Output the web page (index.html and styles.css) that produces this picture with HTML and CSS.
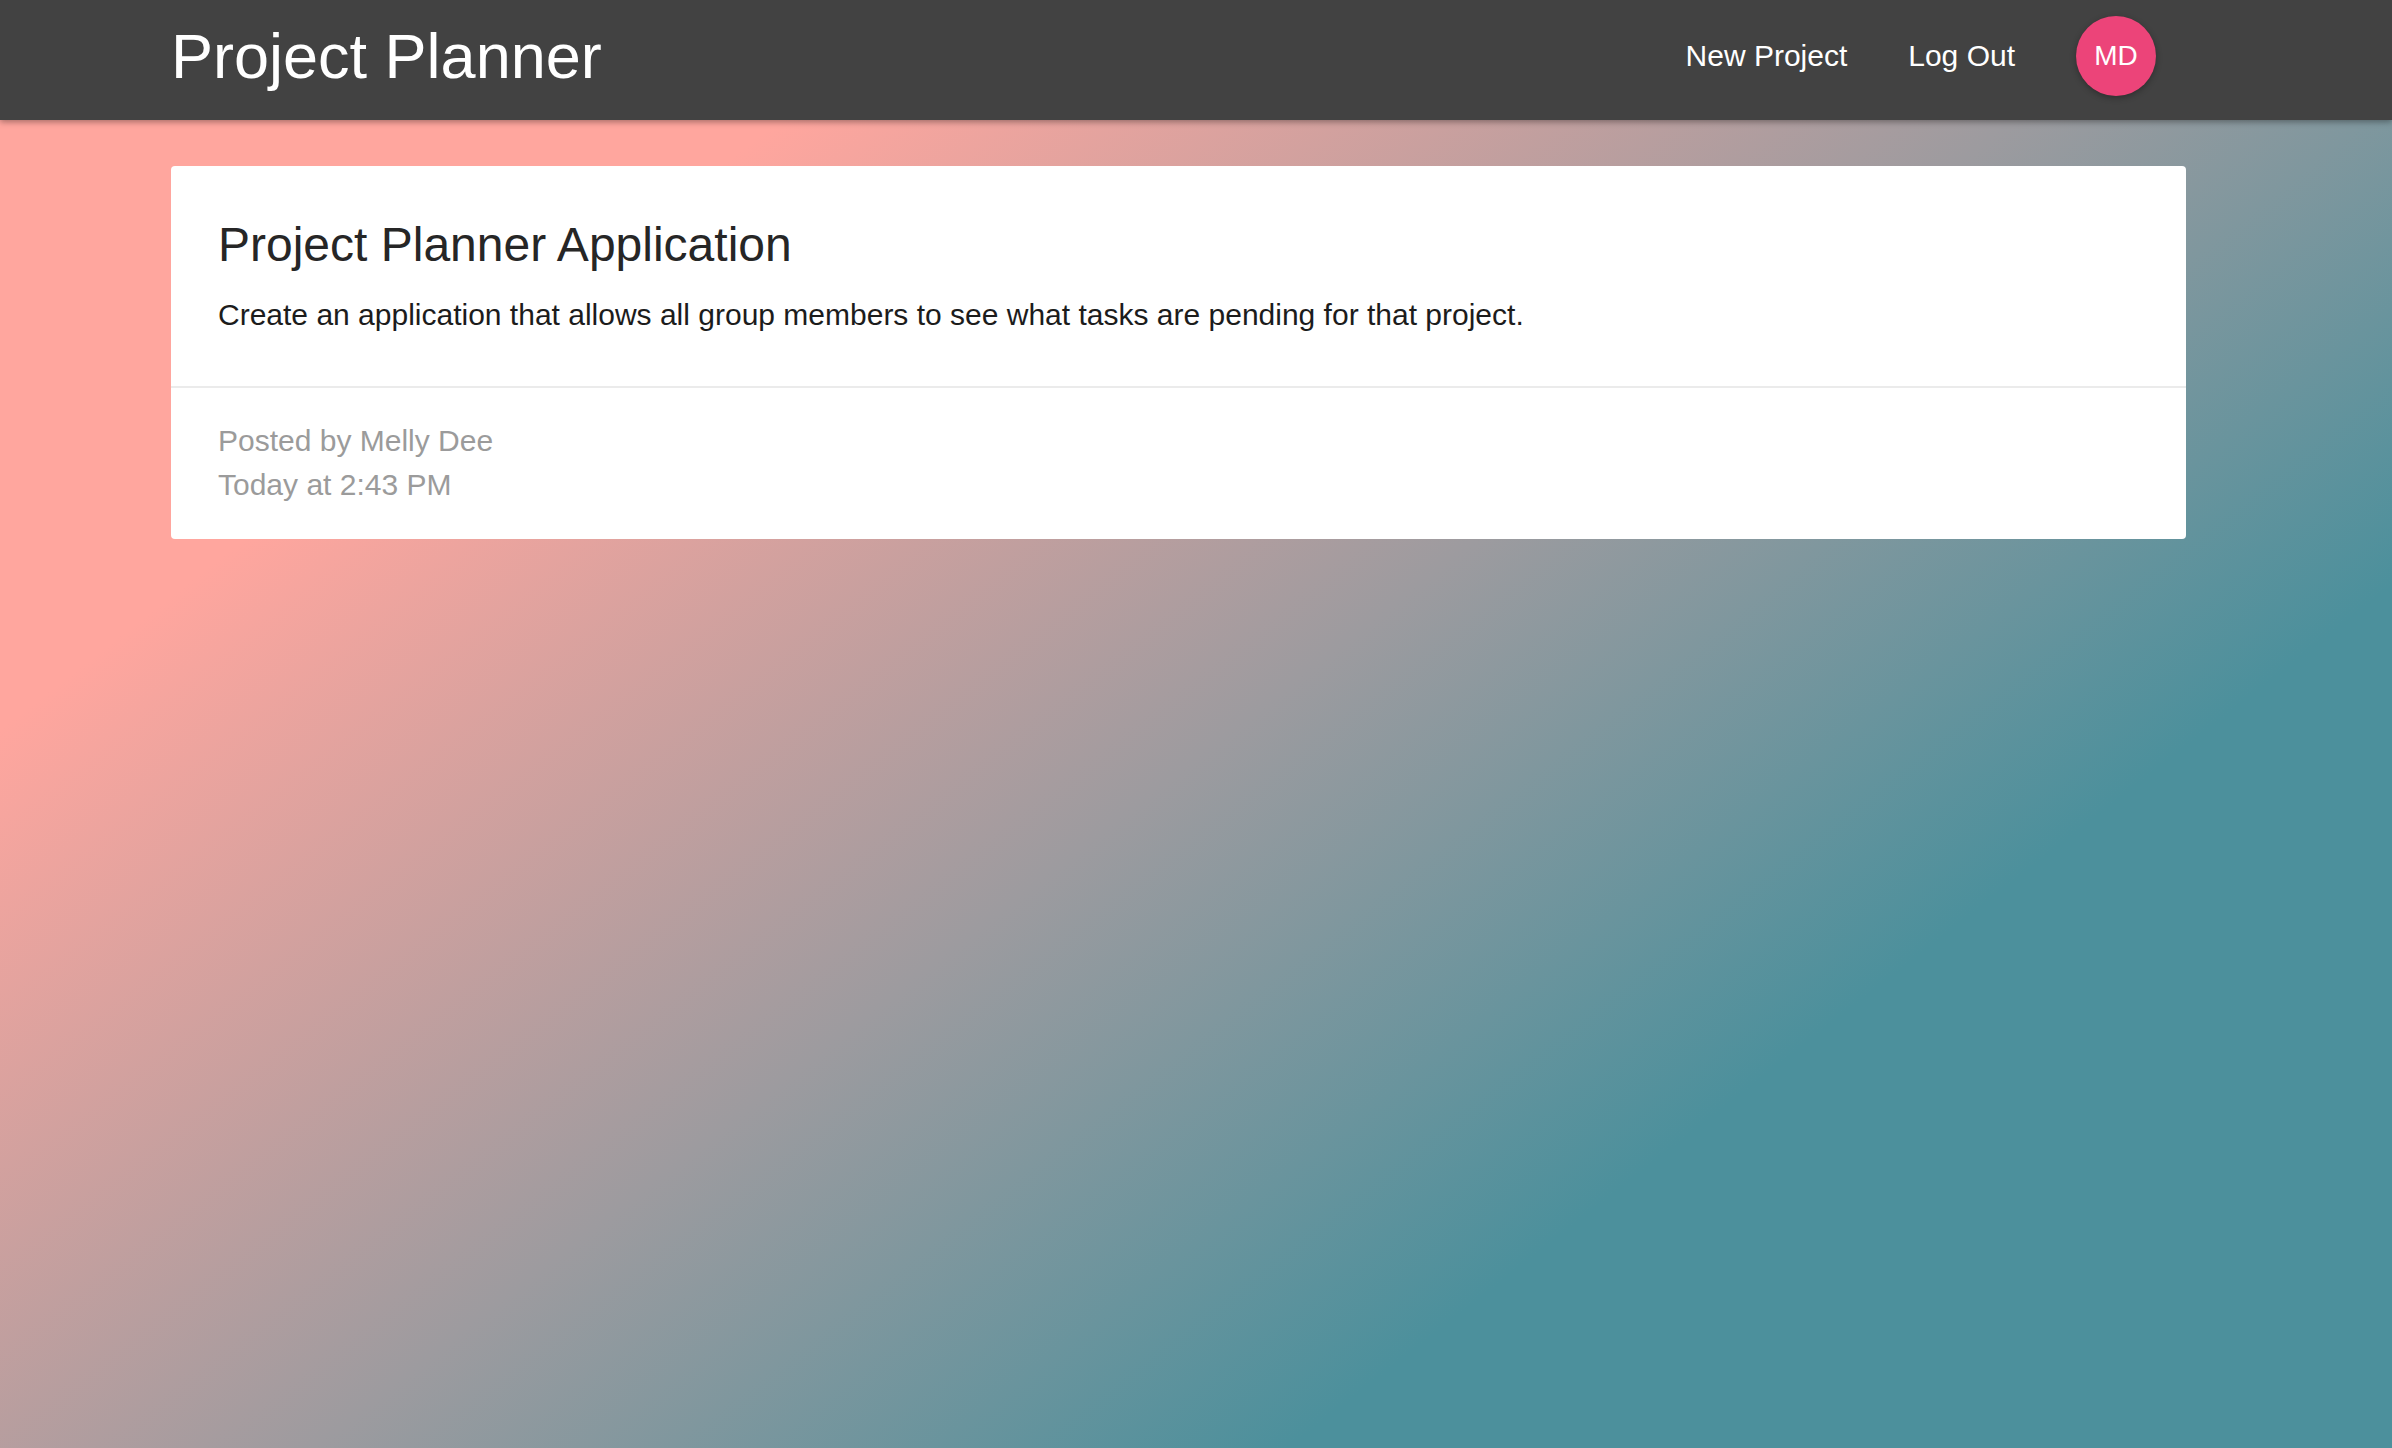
FILE: index.html
```html
<!DOCTYPE html>
<html lang="en">
<head>
<meta charset="utf-8">
<title>Project Planner</title>
<link rel="stylesheet" href="styles.css">
</head>
<body>
  <header class="navbar">
    <div class="container nav-inner">
      <a class="brand" href="#">Project Planner</a>
      <nav class="nav-links">
        <a class="nav-link" href="#">New Project</a>
        <a class="nav-link" href="#">Log Out</a>
        <a class="avatar" href="#">MD</a>
      </nav>
    </div>
  </header>
  <main class="container content">
    <section class="card">
      <div class="card-body">
        <h2 class="card-title">Project Planner Application</h2>
        <p class="card-text">Create an application that allows all group members to see what tasks are pending for that project.</p>
      </div>
      <div class="card-footer">
        <div class="meta">Posted by Melly Dee</div>
        <div class="meta">Today at 2:43 PM</div>
      </div>
    </section>
  </main>
</body>
</html>
```

FILE: styles.css
```css
html {
  min-height: 100%;
}

body {
  margin: 0;
  min-height: 100vh;
  font-family: "Liberation Sans", Arial, Helvetica, sans-serif;
  background: linear-gradient(142deg, #ffa69e 22%, #9d9b9f 51%, #4c909c 74%);
  background-attachment: fixed;
}

a {
  text-decoration: none;
  color: inherit;
}

.container {
  width: 2015px;
  margin-left: 171px;
  box-sizing: border-box;
}

.navbar {
  height: 120px;
  background: #424242;
  box-shadow: 0 2px 6px rgba(0, 0, 0, 0.35);
  position: relative;
  z-index: 1;
}

.nav-inner {
  height: 120px;
  display: flex;
  align-items: center;
  justify-content: space-between;
  padding-bottom: 9px;
  padding-right: 30px;
}

.brand {
  color: #ffffff;
  font-size: 63px;
  line-height: 72px;
}

.nav-links {
  display: flex;
  align-items: center;
  gap: 61px;
}

.nav-link {
  color: #ffffff;
  font-size: 30px;
  line-height: 35px;
}

.avatar {
  width: 80px;
  height: 80px;
  border-radius: 50%;
  background: #ec4479;
  color: #ffffff;
  font-size: 28px;
  display: flex;
  align-items: center;
  justify-content: center;
  box-shadow: 0 2px 6px rgba(0, 0, 0, 0.3);
}

.content {
  padding-top: 46px;
}

.card {
  background: #ffffff;
  border-radius: 4px;
}

.card-body {
  padding: 50px 48px 49px 47px;
  border-bottom: 2px solid #ebebeb;
}

.card-title {
  margin: 0;
  font-size: 48px;
  line-height: 58px;
  font-weight: normal;
  color: #262626;
}

.card-text {
  margin: 18px 0 0;
  font-size: 30px;
  line-height: 45px;
  color: #1c1c1c;
}

.card-footer {
  padding: 31px 48px 32px 47px;
}

.meta {
  font-size: 30px;
  line-height: 44px;
  color: #9b9b9b;
}
```
